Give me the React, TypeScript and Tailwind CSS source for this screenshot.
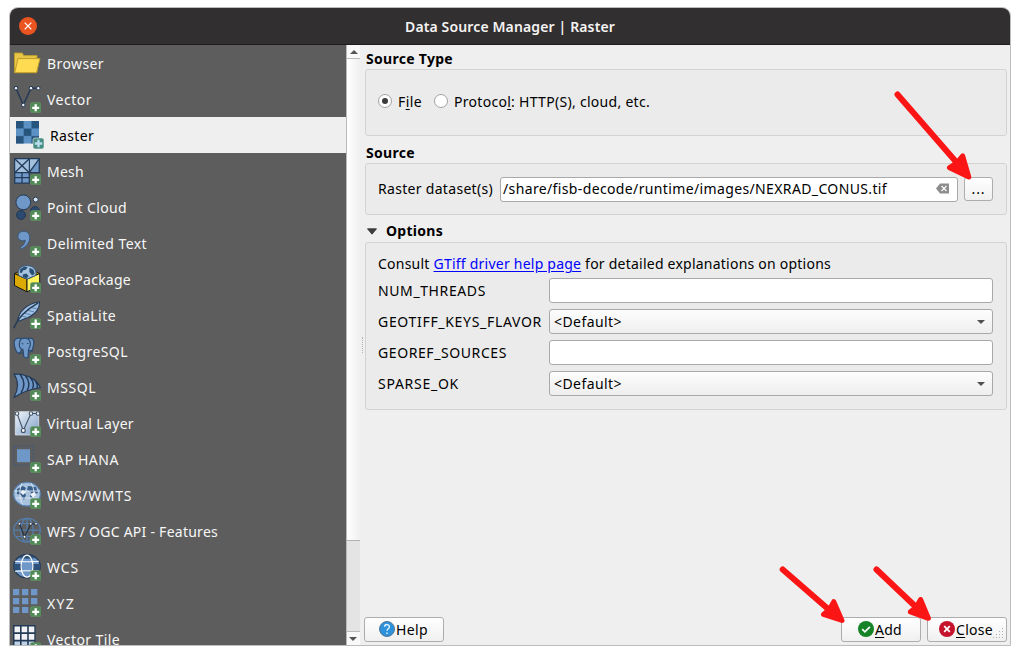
import { useLayoutEffect, useRef, useState } from 'react';
import type { ReactNode } from 'react';

/** Spreads a run of text evenly over the given width in pixels. */
function Fit({ w, className = '', children }: { w: number; className?: string; children: ReactNode }) {
  const ref = useRef<HTMLSpanElement>(null);
  const [spacing, setSpacing] = useState(0);
  useLayoutEffect(() => {
    const el = ref.current;
    if (!el) return;
    const count = (el.textContent ?? '').length;
    setSpacing((w - el.getBoundingClientRect().width) / count);
  }, []);
  return (
    <span ref={ref} className={`inline-block whitespace-pre ${className}`} style={{ letterSpacing: spacing }}>
      {children}
    </span>
  );
}

function Accel({ children }: { children: ReactNode }) {
  return <span className="underline decoration-1 underline-offset-2">{children}</span>;
}

function Plus() {
  return (
    <g>
      <rect x="17.4" y="17.6" width="10.6" height="10.2" rx="2" fill="#508a55" stroke="#6a9c6c" strokeWidth=".5" />
      <path d="M22.7 19.3v7M19.2 22.8h7" stroke="#fff" strokeWidth="2.3" />
    </g>
  );
}

const NAVY = '#233a56';
const BLUE = '#6f98c8';

const icons: Record<string, ReactNode> = {
  Browser: (
    <g stroke="#bd9d2c" strokeWidth="1" strokeLinejoin="round">
      <path d="M1.5 23.5V4h7.8l1.4 2.6H24V23z" fill="#e9c646" />
      <path d="M1.7 23.7 5 9.6h22l-3.5 14.1z" fill="#fedb51" />
    </g>
  ),
  Vector: (
    <g>
      <path d="M3 3.2 10.3 20 18 3.2h7.3" fill="none" stroke={NAVY} strokeWidth="1.5" />
      <g fill="#eef2f6" stroke={NAVY} strokeWidth="1">
        <circle cx="3" cy="3.2" r="1.8" />
        <circle cx="18" cy="3.2" r="1.8" />
        <circle cx="25.3" cy="3.2" r="1.8" />
        <circle cx="10.3" cy="20" r="1.8" />
      </g>
      <Plus />
    </g>
  ),
  Raster: (
    <g>
      <path d="M0 0h23v22.4H0z" fill="#5b91c4" />
      <path d="M0 0h7.7v7.5H0zM15.4 0H23v7.5h-7.6zM7.7 7.5h7.7V15H7.7zM0 15h7.7v7.4H0zM15.4 15H23v7.4h-7.6z" fill="#27547c" />
      <path d="M7.7 0v22.4M15.4 0v22.4M0 7.5h23M0 15h23" stroke="#4d80b0" strokeWidth=".4" />
      <rect x="17" y="17" width="11" height="11" rx="2" fill="#468d82" stroke="#eee" strokeWidth=".6" />
      <path d="M22.5 18.7v7.6M18.8 22.5h7.4" stroke="#b9dcec" strokeWidth="2.3" />
    </g>
  ),
  Mesh: (
    <g stroke={NAVY} strokeWidth="1.3">
      <path d="M1.7 1.7h14.6v14H1.7zM16.3 1.7h10v14h-10zM1.7 15.7h14.6v10.5H1.7z" fill={BLUE} />
      <path d="M2.4 2.4h13.2v12.6H2.4zM17 2.4h8.5L17 13z" fill="#a3bfde" stroke="none" />
      <path d="m1.7 1.7 14.6 14M16.3 1.7l-14.6 14M26.3 1.7l-10 14M1.7 20.7h14.6M9 15.7v10.5" fill="none" />
      <Plus />
    </g>
  ),
  'Point Cloud': (
    <g>
      <circle cx="10.3" cy="9.3" r="7.4" fill={BLUE} stroke={NAVY} />
      <circle cx="22.7" cy="6.6" r="2.5" fill="#d8e2ed" stroke={NAVY} />
      <circle cx="22" cy="18" r="4.4" fill="#2b4a6d" stroke={NAVY} />
      <circle cx="8" cy="22" r="4.5" fill="#2b4a6d" stroke={NAVY} />
      <Plus />
    </g>
  ),
  'Delimited Text': (
    <g>
      <path d="M7 18.6C10 17 12.3 14 12.2 11.2 8.5 12.8 4.9 10.6 4.9 7.3 5 3.8 8 2 11 2.2c4 .2 6.2 3.5 5.7 7.5-.4 4.2-3.8 8.5-8.8 10.5z" fill={BLUE} stroke="#35577e" strokeWidth="1" />
      <Plus />
    </g>
  ),
  GeoPackage: (
    <g strokeLinejoin="round">
      <path d="M1.5 8.5 14 3l12.7 5.5L14 14.2z" fill="#c39b00" stroke="#222" />
      <path d="M1.5 8.5 14 14.2v12.6L1.5 20.5z" fill="#dca900" stroke="#171717" />
      <path d="m14 14.2 12.7-5.7v12.2L14 26.8z" fill="#fff35b" stroke="#171717" />
      <path d="M5.6 10.4C3.8 5 8 .6 14 .6s10.4 4.4 8.7 9.8L14 14.2z" fill="#a8c4df" stroke="#35587d" />
      <path d="m7.5 4 4-2.6 3.2.8-2 2.6-2.8.8-1 2.4-2.4-.6zM16.5 2.8l4 2 1.2 4-2.6 1.8-2.8-3.6zM9.6 9.4l3.8-.8 2.2 2.4-2 2.6-3.4-1.6z" fill="#294e74" />
      <Plus />
    </g>
  ),
  SpatiaLite: (
    <g strokeLinecap="round">
      <path d="M4.6 19.4C5.8 11 13 3.2 26.4.8 27 7.6 22 14.6 11.6 17.8L6.6 20z" fill="#9fc0e2" stroke={NAVY} strokeWidth="1.1" />
      <path d="m11.5 12.2 6 1.6M14.4 9.2l6.2 1.6M17.6 6.4l5.6 1.2M9 15l5 1.4" stroke="#5b83ae" strokeWidth="1" />
      <path d="M1 26.6C4 19 11 10 24.8 2.2" fill="none" stroke={NAVY} strokeWidth="1.5" />
      <Plus />
    </g>
  ),
  PostgreSQL: (
    <g fill={BLUE} stroke="#2c4a6e" strokeWidth="1.2" strokeLinejoin="round">
      <path d="M8.5 1.5C3 0 .7 2.8 1.2 7c.5 4.4 2.3 9 4.5 9 1.7 0 2.2-1.6 2.7-3zM13 1.5c6-1.4 8.2.6 7.8 4.5-.5 5-2.2 8.6-4 9l-3.3-1z" />
      <path d="M8.2 2C11 .5 15 1 16.5 3.5c1.3 2.5.7 6.4-1 9l-.4 7.2c-1.1 2-4 1.4-4.4-.7L10 12.7C7.5 12 6 9.3 6.4 6.3c.2-2 .8-3.5 1.8-4.3z" />
      <path d="m8.6 6.5 1.8.5M14 6.5h1.5M15 13.5l5.2.4M6 17l4-1.5" fill="none" />
      <Plus />
    </g>
  ),
  MSSQL: (
    <g stroke={NAVY} strokeLinejoin="round">
      <path d="M1 .8C12 .8 23 5 27.3 14.5 18 16 10 18.6 1 24.5 5.5 16.5 5.8 8.5 1 .8z" fill={BLUE} strokeWidth="1.2" />
      <path d="M7.4 1.8c4.3 6 4.6 12 .7 18M12.4 2.8c4 5 4.6 10 1.7 14.7M17.3 4.7c3.3 3.8 4 7.5 2.2 11M22.4 8c1.8 2.3 2.3 4.7 1.7 7" fill="none" strokeWidth="1.5" />
      <Plus />
    </g>
  ),
  'Virtual Layer': (
    <g>
      <defs>
        <linearGradient id="virtual" x1="0" y1="0" x2="1" y2="1">
          <stop offset="0" stopColor="#f0f4f9" />
          <stop offset="1" stopColor="#7d9fc7" />
        </linearGradient>
      </defs>
      <path d="M2.3 2.7h23.4V26H2.3z" fill="url(#virtual)" stroke="#e7ebf0" strokeWidth=".7" />
      <g fill="#f2f4f5" stroke="#435469" strokeWidth="1.1">
        <path d="m4 4.5 6.3 17L18 4.5h6.7" fill="none" />
        <circle cx="4" cy="4.5" r="1.8" />
        <circle cx="18" cy="4.5" r="1.8" />
        <circle cx="25" cy="4.5" r="1.8" />
        <circle cx="10.3" cy="21.5" r="2" />
      </g>
      <Plus />
    </g>
  ),
  'SAP HANA': (
    <g>
      <path d="M1 1.2h19.3v19H1z" fill="none" stroke="#435878" strokeWidth="1.3" strokeDasharray="2 1.7" />
      <path d="M4 4.2h13v13H4z" fill={BLUE} />
      <Plus />
    </g>
  ),
  'WMS/WMTS': (
    <g>
      <ellipse cx="14" cy="13.2" rx="13.3" ry="11.8" fill="#a9c3df" stroke="#5682b4" strokeWidth="1.2" />
      <path d="m4 8 6-3 3 2-2 4 2 3-2 5-3-5-4-1zM15 5l8 1 2 6-3 1-1 5-4-2 1-5-4-2z" fill="#385f8b" />
      <path d="M1 10h26M3 17h20M9 2C6 8 6 18 10 24M18 2c4 6 4 16 0 22" fill="none" stroke="#dbe7f2" strokeWidth=".9" />
      <path d="m7 11 3-2 3 2-3 3zM17 13l5-2 1 3-3 3z" fill="#edf3fa" />
      <Plus />
    </g>
  ),
  'WFS / OGC API - Features': (
    <g>
      <g fill="none" stroke="#537eaf" strokeWidth="1.2">
        <ellipse cx="14" cy="13.2" rx="13.3" ry="11.8" />
        <ellipse cx="14" cy="13.2" rx="6.2" ry="11.8" />
        <path d="M.7 13.2h26.6M3 6.5h22M3 19.5h22M14 1.4V25" />
      </g>
      <path d="m6.5 6.8 5 13 6.5-13h5" fill="none" stroke="#242f3d" strokeWidth="1.2" />
      <g fill="white" stroke="#242f3d" strokeWidth=".7">
        <circle cx="6.5" cy="6.8" r="1.3" />
        <circle cx="17.7" cy="6.8" r="1.3" />
        <circle cx="23" cy="6.8" r="1.3" />
        <circle cx="11.5" cy="19.8" r="1.4" />
      </g>
      <Plus />
    </g>
  ),
  WCS: (
    <g>
      <ellipse cx="14" cy="13.2" rx="13.2" ry="11.7" fill={BLUE} stroke={NAVY} strokeWidth="1.3" />
      <path d="M1.2 11h25.6q.6 3-.6 6H1.8q-1.200-3-.6-6zM5.500 5Q9 2 14 2t8.500 3q-8.500 1.400-17 0z" fill="#2c5079" />
      <path d="M9 8.600h10v9H9z" fill={BLUE} />
      <path d="M2 8.200q12 1.200 24 0M2 18.300q12-1.200 24 0" fill="none" stroke="#fff" strokeWidth="1.1" />
      <ellipse cx="14" cy="13.2" rx="5.9" ry="11" fill="none" stroke="#fff" strokeWidth="1.2" />
      <Plus />
    </g>
  ),
  XYZ: (
    <g>
      <path d="M0 0h6.3v6.2H0zM9 0h6.3v6.2H9zM18 0h6.3v6.2H18zM0 9h6.3v6.2H0zM9 9h6.3v6.2H9zM18 9h6.3v6.2H18zM0 18h6.3v6H0zM9 18h6.3v6H9z" fill={BLUE} />
      <Plus />
    </g>
  ),
  'Vector Tile': (
    <g>
      <path d="M0 0h22.6v24H0z" fill={NAVY} />
      <path d="M1.5 1.5H7v5.800H1.5zM8.6 1.5h5.6v5.800H8.6zM15.800 1.5h5.5v5.800h-5.500zM1.5 9H7v5.800H1.5zM8.6 9h5.6v5.800H8.6zM15.800 9h5.5v5.800h-5.500z" fill="#f0f2f5" />
      <path d="M1.5 16.5H7V22H1.5zM8.6 16.5h5.6V22H8.6zM15.800 16.5h5.5V22h-5.500z" fill="#bdd0e6" />
      <Plus />
    </g>
  ),
};

const sources: { name: string; w: number }[] = [
  { name: 'Browser', w: 57 },
  { name: 'Vector', w: 45 },
  { name: 'Raster', w: 44 },
  { name: 'Mesh', w: 37 },
  { name: 'Point Cloud', w: 80 },
  { name: 'Delimited Text', w: 100 },
  { name: 'GeoPackage', w: 84 },
  { name: 'SpatiaLite', w: 69 },
  { name: 'PostgreSQL', w: 81 },
  { name: 'MSSQL', w: 49 },
  { name: 'Virtual Layer', w: 87 },
  { name: 'SAP HANA', w: 72 },
  { name: 'WMS/WMTS', w: 85 },
  { name: 'WFS / OGC API - Features', w: 171 },
  { name: 'WCS', w: 32 },
  { name: 'XYZ', w: 28 },
  { name: 'Vector Tile', w: 73 },
];

function SourceRow({ name, w, selected }: { name: string; w: number; selected: boolean }) {
  return (
    <li className={`flex h-9 shrink-0 items-center ${selected ? 'bg-[#efefef] pl-1.5 text-black' : 'pl-[3px] text-[#f7f7f7]'}`}>
      <svg className="mr-1.5 h-7 w-7 shrink-0" viewBox="0 0 28 28">
        {icons[name]}
      </svg>
      <Fit w={w} className="pt-0.5">{name}</Fit>
    </li>
  );
}

function Scrollbar() {
  return (
    <div className="flex w-3.5 shrink-0 flex-col border-l border-[#b9b9b9] bg-[#e4e4e4]">
      <div className="flex h-3.5 items-center justify-center border-b border-[#b9b9b9] bg-[#f9f9f9]">
        <svg className="h-1 w-2" viewBox="0 0 8 4">
          <path d="M0 4 4 0l4 4z" fill="#555" />
        </svg>
      </div>
      <div className="h-[482px] border-b border-[#b0b0b0] bg-linear-to-r from-white to-[#f0f0f0]" />
      <div className="flex-1" />
      <div className="flex h-3.5 items-center justify-center border-t border-[#b9b9b9] bg-[#f9f9f9]">
        <svg className="mr-px h-1 w-2" viewBox="0 0 8 4">
          <path d="m0 0 4 4 4-4z" fill="#555" />
        </svg>
      </div>
    </div>
  );
}

function Radio({ checked = false }: { checked?: boolean }) {
  return (
    <span className="flex h-3.5 w-3.5 items-center justify-center rounded-full border border-[#a2a2a2] bg-white">
      {checked && <span className="h-1.5 w-1.5 rounded-full bg-[#3b3b3b]" />}
    </span>
  );
}

const groupBox = 'rounded-[3px] border border-[#d3d3d3] bg-[#ebebeb]';
const field = 'rounded-[3px] border border-[#a9a9a9]';
const button = 'flex items-center justify-center rounded-[3px] border border-[#adadad] bg-linear-to-b from-white to-[#f0f0f0]';

function OptionRow({ label, w, select = false }: { label: string; w: number; select?: boolean }) {
  return (
    <div className="flex h-[25px] items-center">
      <div className="w-[171px] shrink-0">
        <Fit w={w}>{label}</Fit>
      </div>
      {select ? (
        <div className={`flex h-full flex-1 items-center justify-between bg-linear-to-b from-[#fdfdfd] to-[#eeeeee] pr-[7px] pl-1 ${field}`}>
          <Fit w={68}>{'<Default>'}</Fit>
          <svg className="h-1 w-2" viewBox="0 0 8 4">
            <path d="m0 0 4 4 4-4z" fill="#505050" />
          </svg>
        </div>
      ) : (
        <div className={`h-full flex-1 bg-white ${field}`} />
      )}
    </div>
  );
}

function Arrows() {
  return (
    <svg className="pointer-events-none absolute inset-0 h-[655px] w-[1020px]" viewBox="0 0 1020 655">
      <g stroke="#fb1515" strokeLinecap="round" strokeLinejoin="round" fill="#fb1515">
        <g strokeWidth="6">
          <path d="m897.5 94.5 60 69" />
          <path d="m782.7 569.5 46 40" />
          <path d="m876.5 569.5 40 38" />
        </g>
        <g strokeWidth="5">
          <path d="m962.7 156 6.1 21-19.3-9.300 7-4.5z" />
          <path d="m833.8 601.7 8.2 18.800-18.500-6.200 6-5z" />
          <path d="m920.6 599.5 7.800 18.800-18-6.500 5.500-4.200z" />
        </g>
      </g>
    </svg>
  );
}

export default function App() {
  return (
    <div className="relative flex h-[655px] w-[1020px] bg-white pt-[7px] pl-[9px] font-['Noto_Sans','Open_Sans',sans-serif] text-[14px] leading-5 text-black">
      <div className="flex h-[639px] w-[1002px] flex-col overflow-hidden rounded-t-[9px] border border-[#bcbcbc] bg-[#efefef]">
        <header className="flex h-[37px] shrink-0 items-center border-b border-[#1e1c1c] bg-[#322f30] pl-[9px]">
          <svg className="h-[18px] w-[18px]" viewBox="0 0 19 19">
            <circle cx="9.5" cy="9.5" r="9.5" fill="#e95420" />
            <path d="m6 6 7 7m0-7-7 7" stroke="#fff" strokeWidth="1.3" />
          </svg>
          <h1 className="ml-[368px] pt-0.5 font-semibold text-[#f5f3f3]">
            <Fit w={210}>Data Source Manager | Raster</Fit>
          </h1>
        </header>

        <div className="flex min-h-0 flex-1">
          <ul className="flex w-[336px] shrink-0 flex-col overflow-hidden bg-[#5d5d5d]">
            {sources.map((s) => (
              <SourceRow key={s.name} name={s.name} w={s.w} selected={s.name === 'Raster'} />
            ))}
          </ul>
          <Scrollbar />
          <div className="flex w-[5px] shrink-0 items-center justify-center">
            <div className="h-4 border-l border-dotted border-[#b5b5b5]" />
          </div>

          <main className="flex flex-1 flex-col pr-[3px]">
            <h2 className="mt-1 h-5 pl-px font-bold">
              <Fit w={87}>Source Type</Fit>
            </h2>
            <section className={`flex h-[67px] items-center pb-[3px] pl-3 ${groupBox}`}>
              <Radio checked />
              <Fit w={24} className="ml-1.5 pt-0.5">
                F<Accel>i</Accel>le
              </Fit>
              <span className="ml-3">
                <Radio />
              </span>
              <Fit w={196} className="ml-1.5 pt-0.5">
                Protoco<Accel>l</Accel>: HTTP(S), cloud, etc.
              </Fit>
            </section>

            <h2 className="mt-[7px] h-5 pl-px font-bold">
              <Fit w={49}>Source</Fit>
            </h2>
            <section className={`flex h-[52px] items-center pl-3 ${groupBox}`}>
              <Fit w={115}>Raster dataset(s)</Fit>
              <div className={`ml-[7px] flex h-[25px] w-[458px] items-center justify-between bg-white pr-2 pl-0.5 ${field}`}>
                <Fit w={384}>/share/fisb-decode/runtime/images/NEXRAD_CONUS.tif</Fit>
                <svg className="mb-0.5 h-[11px] w-[13px]" viewBox="0 0 13 11">
                  <path d="M0 5.5 4 .5h9v10H4z" fill="#8d8d8d" />
                  <path d="m5.5 3 5 5m0-5-5 5" stroke="#fff" strokeWidth="1.1" />
                </svg>
              </div>
              <div className={`mb-px ml-1.5 h-6 w-[29px] ${button}`}>
                <Fit w={14}>...</Fit>
              </div>
            </section>

            <h2 className="mt-1.5 flex h-[21px] items-center pl-0.5 font-bold">
              <svg className="mr-2.5 h-[7px] w-2.5" viewBox="0 0 11 7">
                <path d="M.5.5h10l-5 6z" fill="#404040" stroke="#222" strokeWidth=".8" />
              </svg>
              <Fit w={57} className="-ml-px pb-0.5">Options</Fit>
            </h2>
            <section className={`h-[168px] pt-[11px] pr-[13px] pl-3 ${groupBox}`}>
              <p className="mb-1 h-5">
                <Fit w={453}>
                  Consult <span className="text-[#0000ff] underline underline-offset-2">GTiff driver help page</span> for detailed
                  explanations on options
                </Fit>
              </p>
              <div className="flex flex-col gap-1.5">
                <OptionRow label="NUM_THREADS" w={108} />
                <OptionRow label="GEOTIFF_KEYS_FLAVOR" w={164} select />
                <OptionRow label="GEOREF_SOURCES" w={129} />
                <OptionRow label="SPARSE_OK" w={81} select />
              </div>
            </section>

            <footer className="-ml-px mt-auto mb-[3px] flex h-[25px]">
              <div className={`w-20 pr-px ${button}`}>
                <svg className="mb-px h-4 w-4" viewBox="0 0 16 16">
                  <circle cx="8" cy="8" r="7.5" fill="#2e91dc" stroke="#4f7797" />
                  <path d="M5.6 5.8C5.8 2.7 10.6 2.9 10.4 6 10.3 7.7 8 7.8 8 9.8M8 11.4v1.5" fill="none" stroke="#e5f3ff" strokeWidth="1.4" />
                </svg>
                <Fit w={32} className="ml-px">Help</Fit>
              </div>
              <div className={`mr-1.5 ml-auto w-20 pr-0.5 ${button}`}>
                <svg className="mb-px h-4 w-4" viewBox="0 0 16 16">
                  <circle cx="8" cy="8" r="8" fill="#168327" />
                  <path d="m4.2 8.2 2.7 2.6 5-5" fill="none" stroke="#fff" strokeWidth="1.7" />
                </svg>
                <Fit w={27} className="ml-px">
                  <Accel>A</Accel>dd
                </Fit>
              </div>
              <div className={`relative w-20 pr-0.5 ${button}`}>
                <svg className="mb-px h-4 w-4" viewBox="0 0 16 16">
                  <circle cx="8" cy="8" r="8" fill="#c6132d" />
                  <path d="m5.2 5.2 5.6 5.6m0-5.6-5.6 5.6" stroke="#fff" strokeWidth="1.8" />
                </svg>
                <Fit w={37} className="ml-px">
                  <Accel>C</Accel>lose
                </Fit>
                <svg className="absolute right-0.5 bottom-0.5 h-[11px] w-[11px]" viewBox="0 0 11 11">
                  <path d="M9 0h1v1H9zM6 3h1v1H6zM9 3h1v1H9zM3 6h1v1H3zM6 6h1v1H6zM9 6h1v1H9zM0 9h1v1H0zM3 9h1v1H3zM6 9h1v1H6zM9 9h1v1H9z" fill="#b0b0b0" />
                </svg>
              </div>
            </footer>
          </main>
        </div>
      </div>
      <Arrows />
    </div>
  );
}
